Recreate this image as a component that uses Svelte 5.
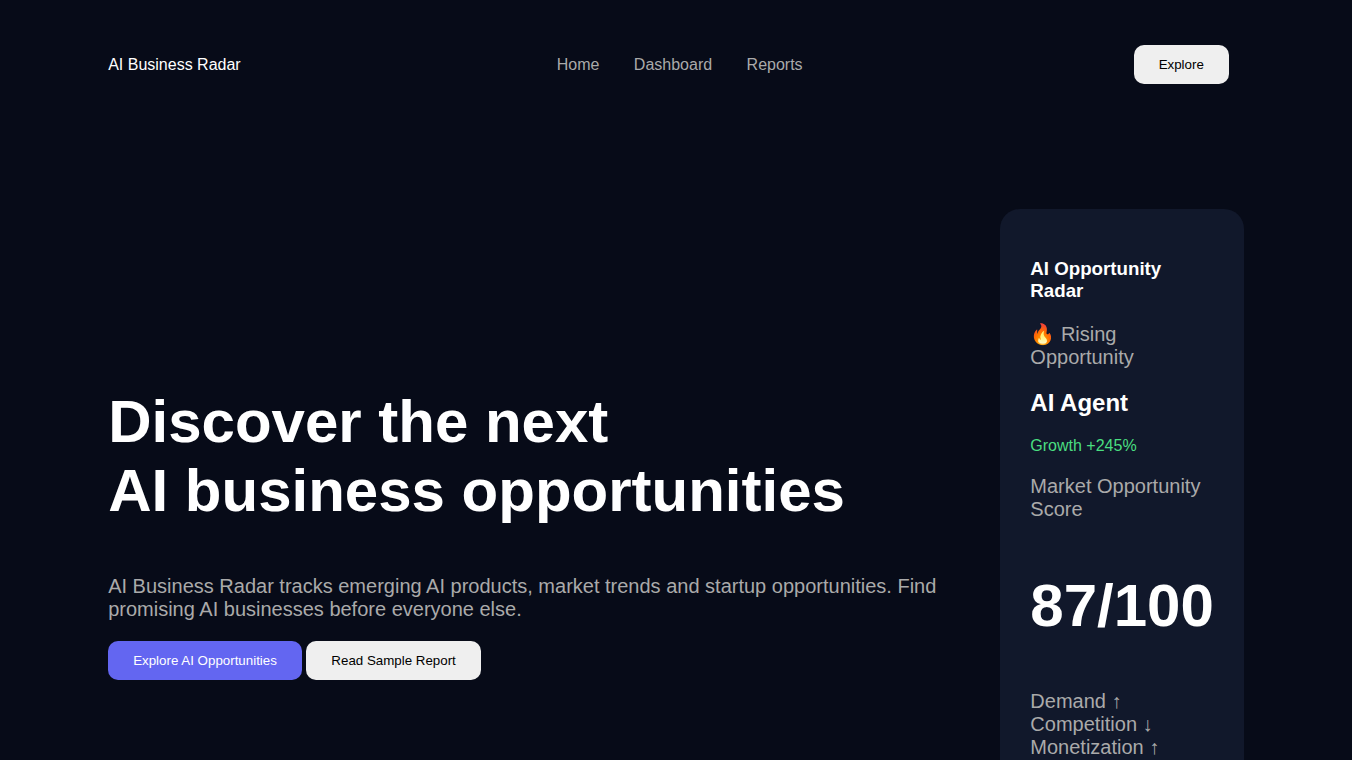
<script>
  const links = ['Home', 'Dashboard', 'Reports'];
  const score = 87;
</script>

<nav>
  <div class="logo">AI Business Radar</div>

  <div class="links">
    {#each links as link}
      <a href="#{link.toLowerCase()}">{link}</a>{' '}
    {/each}
  </div>

  <button class="explore">Explore</button>
</nav>

<section class="hero">
  <div class="intro">
    <h1>Discover the next<br />AI business opportunities</h1>
    <p>
      AI Business Radar tracks emerging AI products, market trends and startup
      opportunities. Find promising AI businesses before everyone else.
    </p>
    <button class="primary">Explore AI Opportunities</button>
    <button>Read Sample Report</button>
  </div>

  <div class="card">
    <h3>AI Opportunity Radar</h3>
    <p>🔥 Rising Opportunity</p>
    <h2>AI Agent</h2>
    <div class="growth">Growth +245%</div>
    <p>Market Opportunity Score</p>
    <h1>{score}/100</h1>
    <p>
      Demand ↑<br />
      Competition ↓<br />
      Monetization ↑
    </p>
  </div>
</section>

<style>
  :global(body) {
    margin: 0;
    background: #070b18;
    color: white;
    font-family: Arial, 'Liberation Sans', sans-serif;
  }

  nav {
    display: flex;
    justify-content: space-between;
    align-items: center;
    padding: 30px 8%;
  }

  .links a {
    color: #aaa;
    text-decoration: none;
    margin: 15px;
  }

  button {
    padding: 12px 25px;
    border: none;
    border-radius: 10px;
    background: #efefef;
    color: black;
    font-family: inherit;
    cursor: pointer;
  }

  .explore {
    margin: 15px;
  }

  .primary {
    background: #6366f1;
    color: white;
  }

  .hero {
    display: grid;
    grid-template-columns: 1fr min-content;
    align-items: center;
    gap: 60px;
    padding: 80px 8%;
  }

  h1 {
    font-size: 60px;
    margin: 50px 0;
  }

  p {
    font-size: 20px;
    color: #aaa;
    margin: 20px 0;
  }

  .card {
    background: #11182b;
    padding: 30px;
    border-radius: 20px;
  }

  .growth {
    color: #4ade80;
  }
</style>
